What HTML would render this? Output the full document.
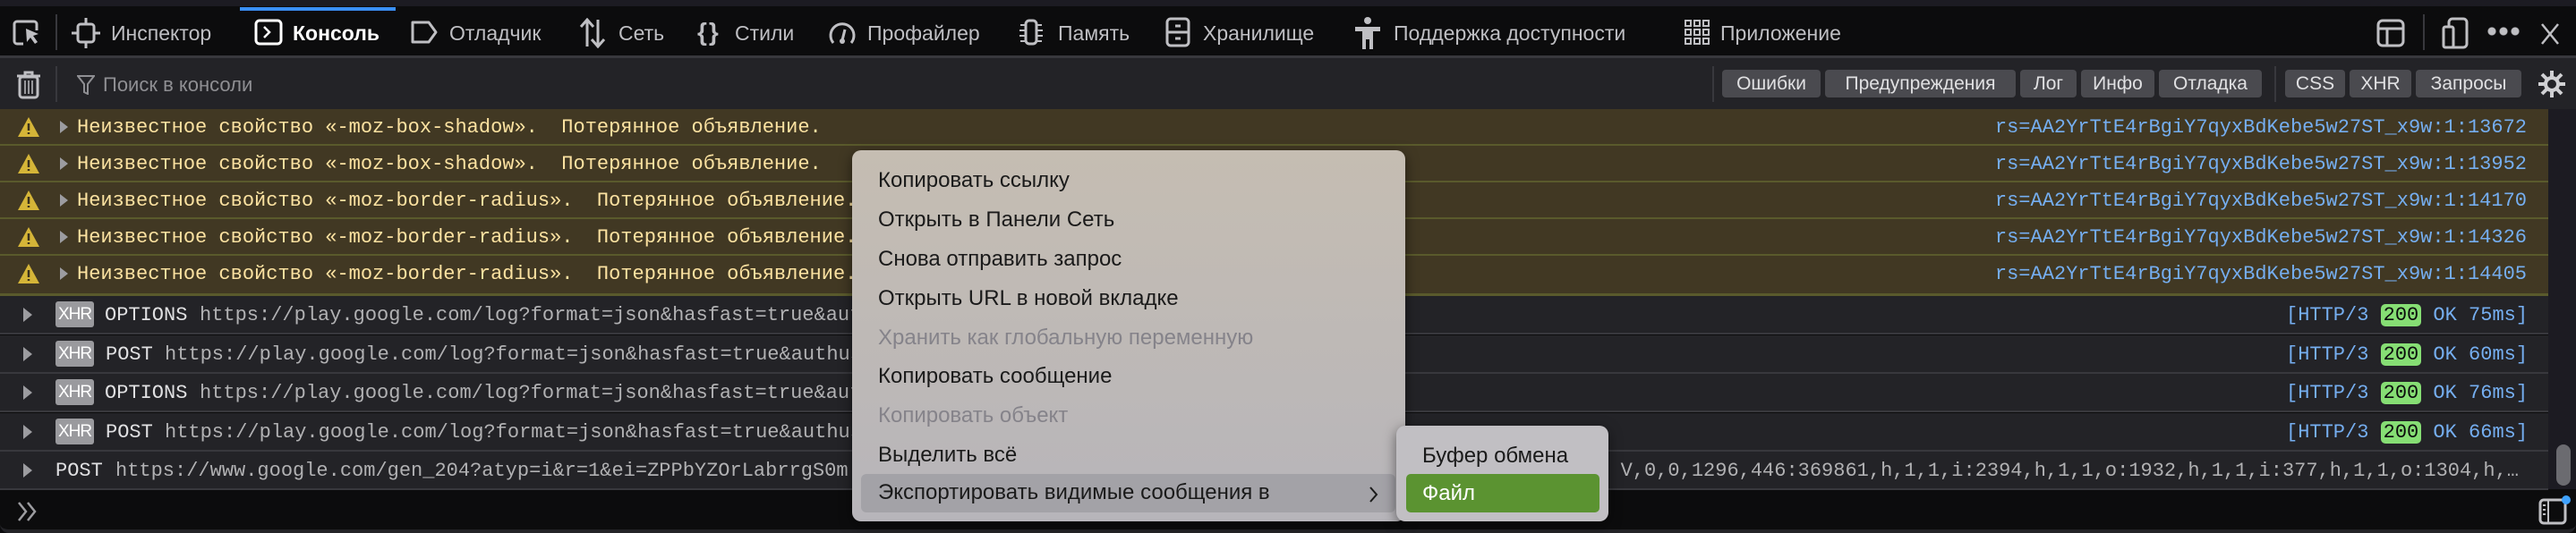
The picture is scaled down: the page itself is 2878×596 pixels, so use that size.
<!DOCTYPE html>
<html><head><meta charset="utf-8"><style>
*{margin:0;padding:0;box-sizing:border-box}
body{width:2878px;height:596px;background:#0c0c0d;position:relative;overflow:hidden;font-family:"Liberation Sans",sans-serif}
.a{position:absolute;white-space:nowrap}
.tab{font-size:23px;color:#bfbfc3;top:24px;line-height:26px}
.mono{font-family:"Liberation Mono",monospace;font-size:22px}
.btn{position:absolute;top:78px;height:31px;background:#4a4a4f;border-radius:4px;color:#e0e0e2;font-size:21px;line-height:31px;text-align:center}
.wrow{position:absolute;left:0;width:2847px;height:41px;background:#413823;border-bottom:2px solid #5a5a2c}
.wrow .t{position:absolute;left:86px;top:8px;color:#fce2a1;white-space:pre}
.wrow .r{position:absolute;right:24px;top:8px;color:#75aef0}
.xrow{position:absolute;left:0;width:2847px;height:43px;background:#232327;border-bottom:2px solid #38383d;overflow:hidden}
.xrow .t{position:absolute;top:9px;color:#b1b1b3;white-space:pre}
.badge{position:absolute;left:62px;top:6px;width:43px;height:29px;background:#9a9a9e;border-radius:3px;color:#fff;font-family:"Liberation Sans",sans-serif;font-size:19px;line-height:29px;text-align:center;letter-spacing:-1px}
.http{position:absolute;left:2554px;top:9px;color:#75aef0}
.ok{display:inline-block;background:#86de74;color:#0c0c0d;border-radius:5px;padding:0 3px}
.arr{position:absolute;left:26px;top:13px;width:0;height:0;border-left:10px solid #9c9ca0;border-top:8px solid transparent;border-bottom:8px solid transparent}
.warr{position:absolute;left:67px;top:13px;width:0;height:0;border-left:9px solid #9c9ca0;border-top:7px solid transparent;border-bottom:7px solid transparent}
.mi{position:absolute;left:29px;font-size:24px;color:#1a1a1a;line-height:30px}
</style></head><body>
<div class="a" style="left:0;top:0;width:2878px;height:7px;background:#1c1b22"></div>
<div class="a" style="left:0;top:62px;width:2878px;height:3px;background:#38383d"></div>
<div class="a" style="left:268px;top:8px;width:174px;height:4px;background:#3a8ff5"></div>
<svg class="a" style="left:14px;top:22px" width="32" height="30" viewBox="0 0 32 30"><path d="M12 27H5a3 3 0 0 1-3-3V5a3 3 0 0 1 3-3h19a3 3 0 0 1 3 3v7" fill="none" stroke="#bfbfc3" stroke-width="3"/><path d="M15 10l14 6-6 2 5 7-3 2-5-7-4 5z" fill="#bfbfc3"/></svg>
<div class="a" style="left:62px;top:16px;width:2px;height:40px;background:#38383d"></div>
<svg class="a" style="left:80px;top:20px" width="32" height="34" viewBox="0 0 32 34"><rect x="7" y="7" width="18" height="20" rx="3" fill="none" stroke="#bfbfc3" stroke-width="3"/><path d="M16 0v7M16 27v7M0 17h7M25 17h7" stroke="#bfbfc3" stroke-width="3"/></svg>
<div class="a tab" style="left:124px">Инспектор</div>
<svg class="a" style="left:284px;top:21px" width="32" height="30" viewBox="0 0 32 30"><rect x="2" y="2" width="28" height="26" rx="4" fill="none" stroke="#fff" stroke-width="3"/><path d="M11 9l6 6-6 6" fill="none" stroke="#fff" stroke-width="2.5"/></svg>
<div class="a tab" style="left:327px;color:#fff;font-weight:bold">Консоль</div>
<svg class="a" style="left:458px;top:22px" width="32" height="28" viewBox="0 0 32 28"><path d="M3 3h18l8 11-8 11H3z" fill="none" stroke="#bfbfc3" stroke-width="3" stroke-linejoin="round"/></svg>
<div class="a tab" style="left:502px">Отладчик</div>
<svg class="a" style="left:647px;top:20px" width="30" height="34" viewBox="0 0 30 34"><path d="M9 32V3M2 10l7-8 7 8M21 2v29M14 24l7 8 7-8" fill="none" stroke="#bfbfc3" stroke-width="3"/></svg>
<div class="a tab" style="left:691px">Сеть</div>
<div class="a" style="left:779px;top:20px;font-size:28px;color:#bfbfc3;font-weight:bold;letter-spacing:2px">{}</div>
<div class="a tab" style="left:821px">Стили</div>
<svg class="a" style="left:925px;top:20px" width="32" height="32" viewBox="0 0 32 32"><path d="M6 28A13 13 0 1 1 26 28" fill="none" stroke="#bfbfc3" stroke-width="3"/><path d="M16 25l3-12" stroke="#bfbfc3" stroke-width="3"/><circle cx="16" cy="26" r="3" fill="#bfbfc3"/></svg>
<div class="a tab" style="left:969px">Профайлер</div>
<svg class="a" style="left:1137px;top:20px" width="30" height="32" viewBox="0 0 30 32"><rect x="9" y="3" width="12" height="26" rx="4" fill="none" stroke="#bfbfc3" stroke-width="3"/><path d="M3 8h5M2 14h6M2 20h6M3 26h5M22 8h5M22 14h6M22 20h6M22 26h5" stroke="#bfbfc3" stroke-width="2"/></svg>
<div class="a tab" style="left:1182px">Память</div>
<svg class="a" style="left:1302px;top:19px" width="28" height="34" viewBox="0 0 28 34"><rect x="2" y="2" width="24" height="30" rx="4" fill="none" stroke="#bfbfc3" stroke-width="3"/><path d="M2 17h24M11 10h6M11 24h6" stroke="#bfbfc3" stroke-width="3"/></svg>
<div class="a tab" style="left:1344px">Хранилище</div>
<svg class="a" style="left:1513px;top:19px" width="30" height="36" viewBox="0 0 30 36"><circle cx="15" cy="4" r="4" fill="#bfbfc3"/><path d="M1 11h28v5h-8v20h-4V25h-4v11H9V16H1z" fill="#bfbfc3"/></svg>
<div class="a tab" style="left:1557px">Поддержка доступности</div>
<svg class="a" style="left:1882px;top:22px" width="29" height="28" viewBox="0 0 29 28" fill="none" stroke="#bfbfc3" stroke-width="2"><rect x="1" y="1" width="6" height="6"/><rect x="11" y="1" width="6" height="6"/><rect x="21" y="1" width="6" height="6"/><rect x="1" y="11" width="6" height="6"/><rect x="11" y="11" width="6" height="6"/><rect x="21" y="11" width="6" height="6"/><rect x="1" y="21" width="6" height="6"/><rect x="11" y="21" width="6" height="6"/><rect x="21" y="21" width="6" height="6"/></svg>
<div class="a tab" style="left:1922px">Приложение</div>
<svg class="a" style="left:2655px;top:21px" width="32" height="32" viewBox="0 0 32 32" fill="none" stroke="#bfbfc3" stroke-width="3"><rect x="2" y="2" width="28" height="28" rx="5"/><path d="M2 11h28M12 11v19"/></svg>
<div class="a" style="left:2707px;top:16px;width:2px;height:40px;background:#38383d"></div>
<svg class="a" style="left:2728px;top:19px" width="30" height="36" viewBox="0 0 30 36" fill="none" stroke="#bfbfc3" stroke-width="3"><rect x="8" y="2" width="20" height="32" rx="4"/><rect x="2" y="11" width="11" height="23" rx="2" fill="#0c0c0d"/></svg>
<div class="a" style="left:2779px;top:30px;width:36px;height:10px;background:radial-gradient(circle at 5px 5px,#bfbfc3 4px,transparent 5px) 0 0/13px 10px repeat-x"></div>
<svg class="a" style="left:2838px;top:26px" width="22" height="24" viewBox="0 0 22 24"><path d="M2 1l18 22M20 1L2 23" stroke="#bfbfc3" stroke-width="2.5"/></svg>
<div class="a" style="left:0;top:65px;width:2878px;height:57px;background:#232327"></div>
<svg class="a" style="left:18px;top:79px" width="28" height="32" viewBox="0 0 28 32" fill="none" stroke="#bfbfc3" stroke-width="3"><path d="M1 6h26M10 6V2h8v4"/><rect x="4" y="7" width="20" height="23" rx="3"/><path d="M10 11v15M14 11v15M18 11v15" stroke-width="1.5"/></svg>
<div class="a" style="left:62px;top:74px;width:2px;height:40px;background:#38383d"></div>
<svg class="a" style="left:86px;top:84px" width="20" height="22" viewBox="0 0 20 22"><path d="M1 1h18l-7 9v11l-4-2V10z" fill="none" stroke="#8f8f93" stroke-width="2"/></svg>
<div class="a" style="left:115px;top:82px;font-size:22px;color:#8f8f93">Поиск в консоли</div>
<div class="a" style="left:1913px;top:74px;width:2px;height:40px;background:#38383d"></div>
<div class="btn" style="left:1924px;width:110px">Ошибки</div>
<div class="btn" style="left:2039px;width:213px">Предупреждения</div>
<div class="btn" style="left:2257px;width:63px">Лог</div>
<div class="btn" style="left:2325px;width:82px">Инфо</div>
<div class="btn" style="left:2412px;width:115px">Отладка</div>
<div class="a" style="left:2541px;top:74px;width:2px;height:40px;background:#38383d"></div>
<div class="btn" style="left:2553px;width:67px">CSS</div>
<div class="btn" style="left:2625px;width:69px">XHR</div>
<div class="btn" style="left:2699px;width:118px">Запросы</div>
<svg class="a" style="left:2835px;top:78px" width="32" height="32" viewBox="0 0 32 32"><g stroke="#d0d0d3" stroke-width="4"><path d="M16 1v30M1 16h30M5 5l22 22M27 5L5 27"/></g><circle cx="16" cy="16" r="9" fill="#d0d0d3"/><circle cx="16" cy="16" r="5" fill="#232327"/></svg>
<div class="a" style="left:2847px;top:122px;width:31px;height:425px;background:#1c1b22"></div>
<div class="a" style="left:2856px;top:497px;width:16px;height:46px;background:#6b6b70;border-radius:8px"></div>
<div class="wrow mono" style="top:122px"><svg style="position:absolute;left:19px;top:8px" width="26" height="24" viewBox="0 0 26 24"><path d="M13 1L25 23H1z" fill="#d5b538"/><path d="M13 8v8M13 18v2" stroke="#3a311d" stroke-width="2.5"/></svg><div class="warr"></div><span class="t">Неизвестное свойство «-moz-box-shadow».  Потерянное объявление.</span><span class="r">rs=AA2YrTtE4rBgiY7qyxBdKebe5w27ST_x9w:1:13672</span></div>
<div class="wrow mono" style="top:163px"><svg style="position:absolute;left:19px;top:8px" width="26" height="24" viewBox="0 0 26 24"><path d="M13 1L25 23H1z" fill="#d5b538"/><path d="M13 8v8M13 18v2" stroke="#3a311d" stroke-width="2.5"/></svg><div class="warr"></div><span class="t">Неизвестное свойство «-moz-box-shadow».  Потерянное объявление.</span><span class="r">rs=AA2YrTtE4rBgiY7qyxBdKebe5w27ST_x9w:1:13952</span></div>
<div class="wrow mono" style="top:204px"><svg style="position:absolute;left:19px;top:8px" width="26" height="24" viewBox="0 0 26 24"><path d="M13 1L25 23H1z" fill="#d5b538"/><path d="M13 8v8M13 18v2" stroke="#3a311d" stroke-width="2.5"/></svg><div class="warr"></div><span class="t">Неизвестное свойство «-moz-border-radius».  Потерянное объявление.</span><span class="r">rs=AA2YrTtE4rBgiY7qyxBdKebe5w27ST_x9w:1:14170</span></div>
<div class="wrow mono" style="top:245px"><svg style="position:absolute;left:19px;top:8px" width="26" height="24" viewBox="0 0 26 24"><path d="M13 1L25 23H1z" fill="#d5b538"/><path d="M13 8v8M13 18v2" stroke="#3a311d" stroke-width="2.5"/></svg><div class="warr"></div><span class="t">Неизвестное свойство «-moz-border-radius».  Потерянное объявление.</span><span class="r">rs=AA2YrTtE4rBgiY7qyxBdKebe5w27ST_x9w:1:14326</span></div>
<div class="wrow mono" style="top:286px;height:45px;border-bottom-width:3px"><svg style="position:absolute;left:19px;top:8px" width="26" height="24" viewBox="0 0 26 24"><path d="M13 1L25 23H1z" fill="#d5b538"/><path d="M13 8v8M13 18v2" stroke="#3a311d" stroke-width="2.5"/></svg><div class="warr"></div><span class="t">Неизвестное свойство «-moz-border-radius».  Потерянное объявление.</span><span class="r">rs=AA2YrTtE4rBgiY7qyxBdKebe5w27ST_x9w:1:14405</span></div>
<div class="xrow mono" style="top:331px"><div class="arr"></div><div class="badge">XHR</div><span class="t" style="left:117px;color:#e0e0e2">OPTIONS</span><span class="t" style="left:223px">https://play.google.com/log?format=json&amp;hasfast=true&amp;authuser=0</span><span class="http">[HTTP/3 <span class="ok">200</span> OK 75ms]</span></div>
<div class="xrow mono" style="top:375px"><div class="arr"></div><div class="badge">XHR</div><span class="t" style="left:118px;color:#e0e0e2">POST</span><span class="t" style="left:184px">https://play.google.com/log?format=json&amp;hasfast=true&amp;authuser=0</span><span class="http">[HTTP/3 <span class="ok">200</span> OK 60ms]</span></div>
<div class="xrow mono" style="top:418px"><div class="arr"></div><div class="badge">XHR</div><span class="t" style="left:117px;color:#e0e0e2">OPTIONS</span><span class="t" style="left:223px">https://play.google.com/log?format=json&amp;hasfast=true&amp;authuser=0</span><span class="http">[HTTP/3 <span class="ok">200</span> OK 76ms]</span></div>
<div class="xrow mono" style="top:462px"><div class="arr"></div><div class="badge">XHR</div><span class="t" style="left:118px;color:#e0e0e2">POST</span><span class="t" style="left:184px">https://play.google.com/log?format=json&amp;hasfast=true&amp;authuser=0</span><span class="http">[HTTP/3 <span class="ok">200</span> OK 66ms]</span></div>
<div class="xrow mono" style="top:505px"><div class="arr"></div><span class="t" style="left:62px;color:#e0e0e2">POST</span><span class="t" style="left:129px">https://www.google.com/gen_204?atyp=i&amp;r=1&amp;ei=ZPPbYZOrLabrrgS0m</span><span class="t" style="right:33px">V,0,0,1296,446:369861,h,1,1,i:2394,h,1,1,o:1932,h,1,1,i:377,h,1,1,o:1304,h,…</span></div>
<div class="a" style="left:0;top:548px;width:2878px;height:48px;background:#0c0c0d;border-bottom:4px solid #232327;border-radius:0 0 10px 10px"></div>
<svg class="a" style="left:19px;top:561px" width="26" height="22" viewBox="0 0 26 22" fill="none" stroke="#9c9ca0" stroke-width="2.5"><path d="M2 1l8 10-8 10M12 1l8 10-8 10"/></svg>
<svg class="a" style="left:2836px;top:553px" width="40" height="34" viewBox="0 0 40 34"><rect x="2" y="6" width="28" height="26" rx="4" fill="none" stroke="#bfbfc3" stroke-width="3"/><path d="M11 6v26M5 12h3M5 17h3M5 22h3" stroke="#bfbfc3" stroke-width="2"/><circle cx="31" cy="6" r="5" fill="#3fa2ff"/></svg>
<div class="a" style="left:952px;top:168px;width:618px;height:415px;border-radius:10px;background:linear-gradient(#c5bdb2,#b7b5ba);box-shadow:0 4px 14px rgba(0,0,0,.5)">
<div class="mi" style="top:19px">Копировать ссылку</div>
<div class="mi" style="top:63px">Открыть в Панели Сеть</div>
<div class="mi" style="top:107px">Снова отправить запрос</div>
<div class="mi" style="top:151px">Открыть URL в новой вкладке</div>
<div class="mi" style="top:195px;color:#85838a">Хранить как глобальную переменную</div>
<div class="mi" style="top:238px">Копировать сообщение</div>
<div class="mi" style="top:282px;color:#85838a">Копировать объект</div>
<div class="mi" style="top:326px">Выделить всё</div>
<div class="a" style="left:10px;top:362px;width:597px;height:43px;background:#a3a2a7;border-radius:6px"></div>
<div class="mi" style="top:368px">Экспортировать видимые сообщения в</div>
<svg class="a" style="left:578px;top:376px" width="10" height="18" viewBox="0 0 10 18"><path d="M1 1l7 8-7 8" fill="none" stroke="#1a1a1a" stroke-width="2"/></svg>
</div>
<div class="a" style="left:1560px;top:476px;width:237px;height:107px;border-radius:10px;background:#c1bfc3;box-shadow:0 4px 14px rgba(0,0,0,.5)">
<div class="mi" style="left:29px;top:19px">Буфер обмена</div>
<div class="a" style="left:11px;top:54px;width:216px;height:43px;background:#5b9331;border-radius:5px"></div>
<div class="mi" style="left:29px;top:61px;color:#fff">Файл</div>
</div>
</body></html>
